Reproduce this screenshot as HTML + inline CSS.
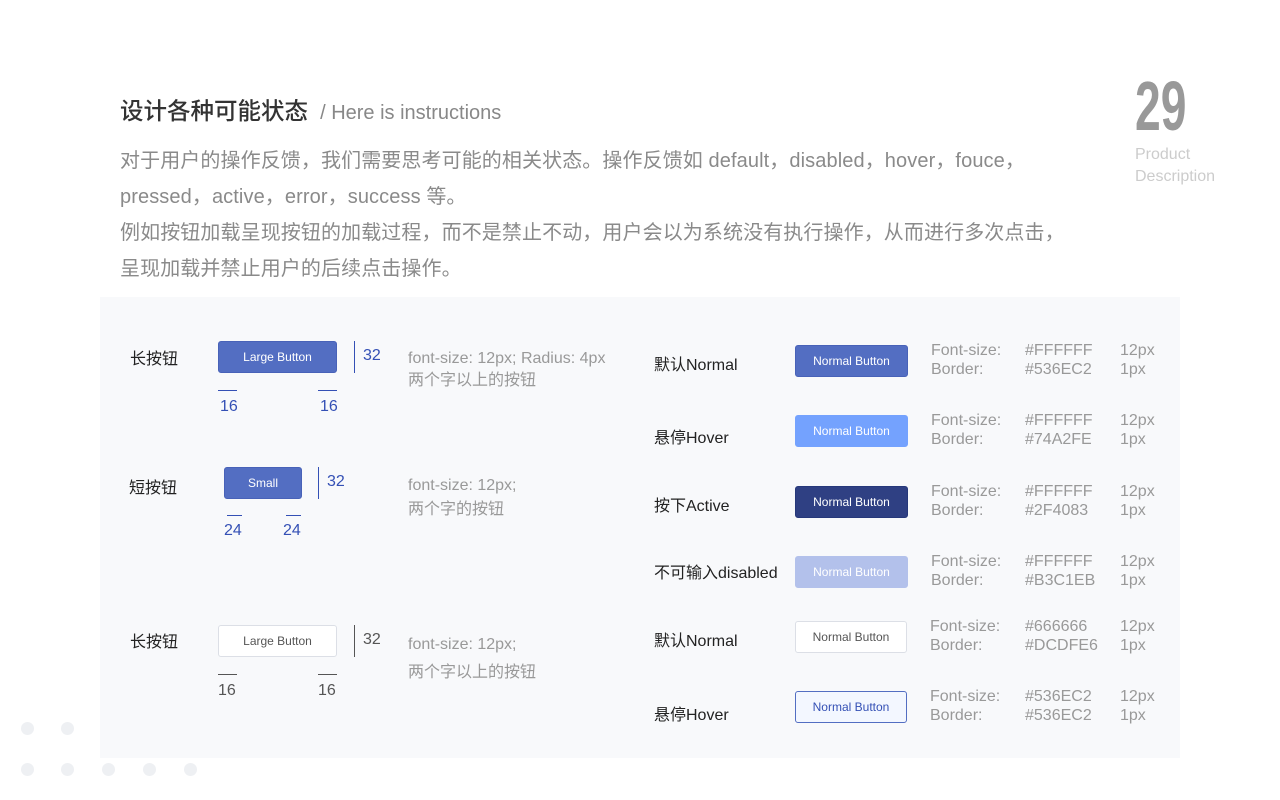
<!DOCTYPE html>
<html><head><meta charset="utf-8"><style>
*{margin:0;padding:0;box-sizing:border-box}
body{width:1280px;height:800px;background:#fff;position:relative;overflow:hidden;font-family:"Liberation Sans","Noto Sans CJK SC",sans-serif}
.a{position:absolute;white-space:nowrap}
.p{color:#8a8a8a;font-size:20px;line-height:36px;letter-spacing:0.1px}
.btn{position:absolute;border-radius:3px;font-size:12px;color:#fff;display:flex;align-items:center;justify-content:center}
.lbl{font-size:16px;color:#222}
.g{font-size:16px;color:#999;line-height:19px}
.blue{color:#3450b5;font-size:16px}
.dot{position:absolute;width:13px;height:13px;border-radius:50%;background:#eef0f3}
</style></head><body>
<div class="a" style="left:120px;top:92px;font-size:23.5px;color:#333;font-weight:500">设计各种可能状态 <span style="font-size:20px;color:#888;font-weight:normal">&nbsp;/ Here is instructions</span></div>
<div class="a p" style="left:120px;top:143px">对于用户的操作反馈，我们需要思考可能的相关状态。操作反馈如 default，disabled，hover，fouce，</div>
<div class="a p" style="left:120px;top:179px">pressed，active，error，success 等。</div>
<div class="a p" style="left:120px;top:215px">例如按钮加载呈现按钮的加载过程，而不是禁止不动，用户会以为系统没有执行操作，从而进行多次点击，</div>
<div class="a p" style="left:120px;top:251px">呈现加载并禁止用户的后续点击操作。</div>
<div class="a" style="left:1135px;top:68px;font-size:70px;font-weight:bold;color:#999;transform:scaleX(0.66);transform-origin:left top;line-height:76px">29</div>
<div class="a" style="left:1135px;top:144px;font-size:16px;color:#ccc;line-height:22px">Product<br>Description</div>
<div class="a" style="left:100px;top:297px;width:1080px;height:461px;background:#f8f9fb"></div>

<div class="a lbl" style="left:130px;top:345px">长按钮</div>
<div class="btn" style="left:218px;top:341px;width:119px;height:32px;background:#536ec2;border:1px solid #4862b8">Large Button</div>
<div class="a" style="left:354px;top:341px;width:1px;height:32px;background:#3450b5"></div>
<div class="a blue" style="left:363px;top:347px">32</div>
<div class="a" style="left:218px;top:390px;width:19px;height:1px;background:#3450b5"></div>
<div class="a" style="left:318px;top:390px;width:19px;height:1px;background:#3450b5"></div>
<div class="a blue" style="left:220px;top:398px">16</div>
<div class="a blue" style="left:320px;top:398px">16</div>
<div class="a g" style="left:408px;top:348px;line-height:22px">font-size: 12px; Radius: 4px<br>两个字以上的按钮</div>

<div class="a lbl" style="left:129px;top:474px">短按钮</div>
<div class="btn" style="left:224px;top:467px;width:78px;height:32px;background:#536ec2;border:1px solid #4862b8">Small</div>
<div class="a" style="left:318px;top:467px;width:1px;height:32px;background:#3450b5"></div>
<div class="a blue" style="left:327px;top:473px">32</div>
<div class="a" style="left:227px;top:515px;width:15px;height:1px;background:#3450b5"></div>
<div class="a" style="left:286px;top:515px;width:15px;height:1px;background:#3450b5"></div>
<div class="a blue" style="left:224px;top:522px">24</div>
<div class="a blue" style="left:283px;top:522px">24</div>
<div class="a g" style="left:408px;top:474px;line-height:24px">font-size: 12px;<br>两个字的按钮</div>

<div class="a lbl" style="left:130px;top:628px">长按钮</div>
<div class="btn" style="left:218px;top:625px;width:119px;height:32px;background:#fff;border:1px solid #dcdfe6;color:#555">Large Button</div>
<div class="a" style="left:354px;top:625px;width:1px;height:32px;background:#555"></div>
<div class="a" style="left:363px;top:631px;font-size:16px;color:#555">32</div>
<div class="a" style="left:218px;top:674px;width:19px;height:1px;background:#555"></div>
<div class="a" style="left:318px;top:674px;width:19px;height:1px;background:#555"></div>
<div class="a" style="left:218px;top:682px;font-size:16px;color:#555">16</div>
<div class="a" style="left:318px;top:682px;font-size:16px;color:#555">16</div>
<div class="a g" style="left:408px;top:631px;line-height:28px">font-size: 12px;<br>两个字以上的按钮</div>

<div class="a lbl" style="left:654px;top:351px">默认Normal</div>
<div class="btn" style="left:795px;top:345px;width:113px;height:32px;background:#536ec2;border:1px solid #4862b8">Normal Button</div>
<div class="a g" style="left:931px;top:341px">Font-size:<br>Border:</div><div class="a g" style="left:1025px;top:341px">#FFFFFF<br>#536EC2</div><div class="a g" style="left:1120px;top:341px">12px<br>1px</div>

<div class="a lbl" style="left:654px;top:424px">悬停Hover</div>
<div class="btn" style="left:795px;top:415px;width:113px;height:32px;background:#74a2fe;border:1px solid #74a2fe">Normal Button</div>
<div class="a g" style="left:931px;top:411px">Font-size:<br>Border:</div><div class="a g" style="left:1025px;top:411px">#FFFFFF<br>#74A2FE</div><div class="a g" style="left:1120px;top:411px">12px<br>1px</div>

<div class="a lbl" style="left:654px;top:492px">按下Active</div>
<div class="btn" style="left:795px;top:486px;width:113px;height:32px;background:#2f4083;border:1px solid #26387a">Normal Button</div>
<div class="a g" style="left:931px;top:482px">Font-size:<br>Border:</div><div class="a g" style="left:1025px;top:482px">#FFFFFF<br>#2F4083</div><div class="a g" style="left:1120px;top:482px">12px<br>1px</div>

<div class="a lbl" style="left:654px;top:559px">不可输入disabled</div>
<div class="btn" style="left:795px;top:556px;width:113px;height:32px;background:#b3c1eb;border:1px solid #b3c1eb">Normal Button</div>
<div class="a g" style="left:931px;top:552px">Font-size:<br>Border:</div><div class="a g" style="left:1025px;top:552px">#FFFFFF<br>#B3C1EB</div><div class="a g" style="left:1120px;top:552px">12px<br>1px</div>

<div class="a lbl" style="left:654px;top:627px">默认Normal</div>
<div class="btn" style="left:795px;top:621px;width:112px;height:32px;background:#fff;border:1px solid #dcdfe6;color:#555">Normal Button</div>
<div class="a g" style="left:930px;top:617px">Font-size:<br>Border:</div><div class="a g" style="left:1025px;top:617px">#666666<br>#DCDFE6</div><div class="a g" style="left:1120px;top:617px">12px<br>1px</div>

<div class="a lbl" style="left:654px;top:701px">悬停Hover</div>
<div class="btn" style="left:795px;top:691px;width:112px;height:32px;background:#f3f7ff;border:1px solid #536ec2;color:#3450b5">Normal Button</div>
<div class="a g" style="left:930px;top:687px">Font-size:<br>Border:</div><div class="a g" style="left:1025px;top:687px">#536EC2<br>#536EC2</div><div class="a g" style="left:1120px;top:687px">12px<br>1px</div>

<div class="dot" style="left:21px;top:722px"></div><div class="dot" style="left:61px;top:722px"></div>
<div class="dot" style="left:21px;top:763px"></div><div class="dot" style="left:61px;top:763px"></div><div class="dot" style="left:102px;top:763px"></div><div class="dot" style="left:143px;top:763px"></div><div class="dot" style="left:184px;top:763px"></div>
</body></html>
